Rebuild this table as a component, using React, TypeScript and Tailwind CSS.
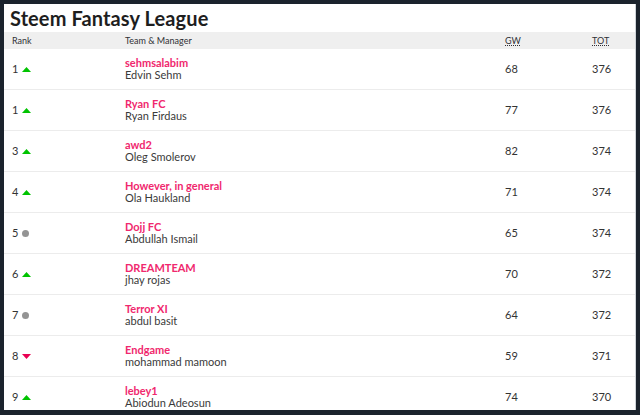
import React from 'react';

type Move = 'up' | 'down' | 'same';

interface Entry {
  rank: number;
  move: Move;
  team: string;
  manager: string;
  gw: number;
  tot: number;
}

const entries: Entry[] = [
  { rank: 1, move: 'up', team: 'sehmsalabim', manager: 'Edvin Sehm', gw: 68, tot: 376 },
  { rank: 1, move: 'up', team: 'Ryan FC', manager: 'Ryan Firdaus', gw: 77, tot: 376 },
  { rank: 3, move: 'up', team: 'awd2', manager: 'Oleg Smolerov', gw: 82, tot: 374 },
  { rank: 4, move: 'up', team: 'However, in general', manager: 'Ola Haukland', gw: 71, tot: 374 },
  { rank: 5, move: 'same', team: 'Dojj FC', manager: 'Abdullah Ismail', gw: 65, tot: 374 },
  { rank: 6, move: 'up', team: 'DREAMTEAM', manager: 'jhay rojas', gw: 70, tot: 372 },
  { rank: 7, move: 'same', team: 'Terror XI', manager: 'abdul basit', gw: 64, tot: 372 },
  { rank: 8, move: 'down', team: 'Endgame', manager: 'mohammad mamoon', gw: 59, tot: 371 },
  { rank: 9, move: 'up', team: 'lebey1', manager: 'Abiodun Adeosun', gw: 74, tot: 370 },
];

const MoveIcon = ({ move }: { move: Move }) => {
  if (move === 'same') {
    return <span className="inline-block w-[7px] h-[7px] rounded-full bg-[#949494]" />;
  }
  return (
    <svg width="9" height="5" viewBox="0 0 9 5">
      {move === 'up' ? (
        <polygon points="0,5 4.5,0 9,5" fill="#00c300" />
      ) : (
        <polygon points="0,0 4.5,5 9,0" fill="#e90052" />
      )}
    </svg>
  );
};

export default function App() {
  return (
    <div className="w-[640px] h-[415px] bg-[#1b232d] p-[4px] overflow-hidden" style={{ fontFamily: 'Lato, "Noto Sans", sans-serif' }}>
      <div className="w-[632px] h-[406px] bg-white border-r border-[#cfd4d9] overflow-hidden">
        {/* Title */}
        <div className="h-[28px] pl-[6px] pt-[2px]">
          <h1 className="text-[20px] leading-[25px] font-bold text-[#1e1e1e] tracking-[0.1px]">Steem Fantasy League</h1>
        </div>

        {/* Header */}
        <div className="grid grid-cols-[113px_380px_87px_1fr] pl-[8px] h-[17px] items-center bg-[#efefef] text-[9px] text-[#2f2f35]">
          <span>Rank</span>
          <span>Team &amp; Manager</span>
          <span className="underline decoration-dotted">GW</span>
          <span className="underline decoration-dotted">TOT</span>
        </div>

        {/* Rows */}
        {entries.map((e, i) => (
          <div
            key={i}
            className="grid grid-cols-[113px_380px_87px_1fr] pl-[8px] h-[41px] items-center border-b border-[#ececec] text-[11px] text-[#333]"
          >
            <div className="flex items-center gap-[4px]">
              <span>{e.rank}</span>
              <MoveIcon move={e.move} />
            </div>
            <div className="flex flex-col leading-[12px]">
              <span className="font-bold text-[#f0286e]">{e.team}</span>
              <span className="text-[#3a3a3a]">{e.manager}</span>
            </div>
            <span>{e.gw}</span>
            <span>{e.tot}</span>
          </div>
        ))}
      </div>
    </div>
  );
}
